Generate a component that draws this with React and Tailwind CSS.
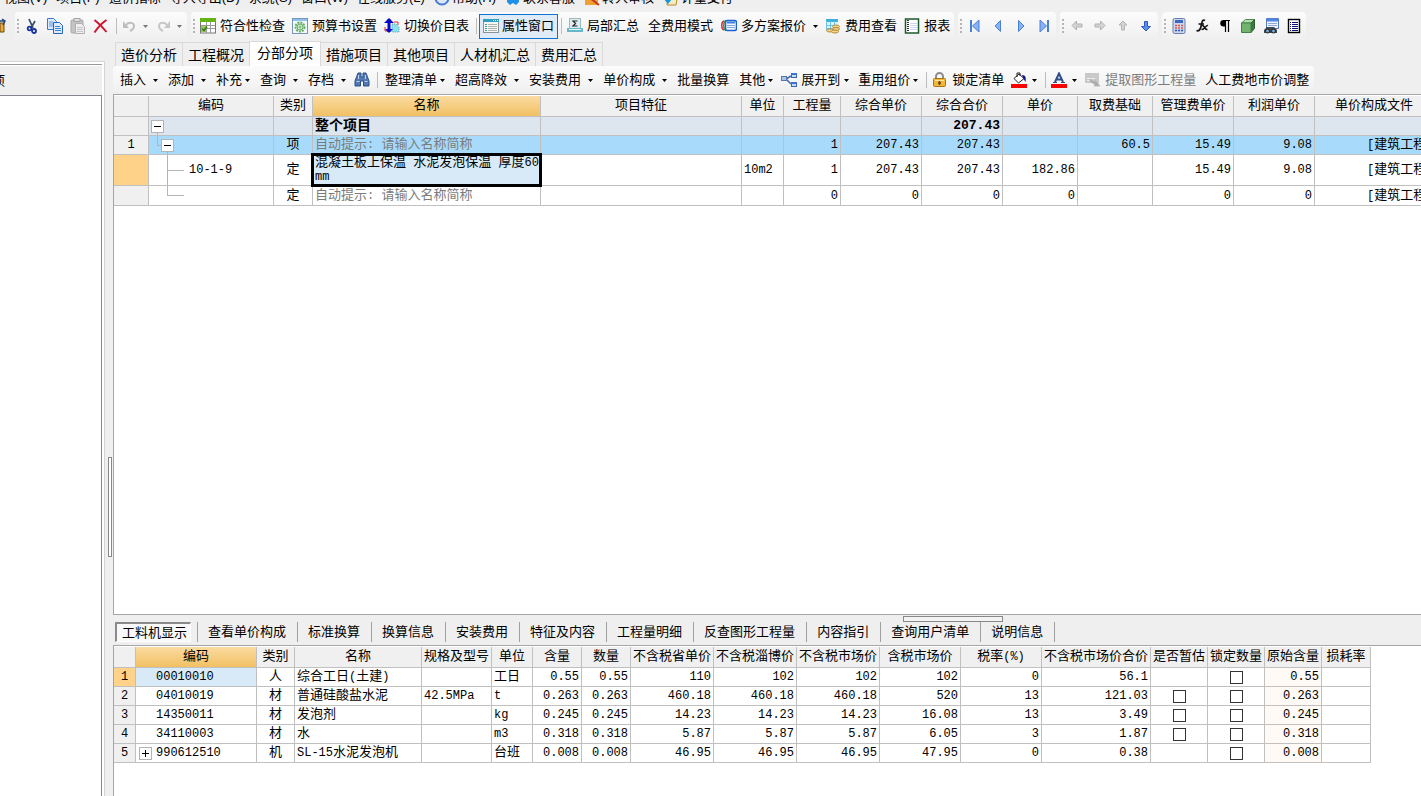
// src/App.jsx
import React, { useState } from 'react';

/* ---------- icons ---------- */

const Svg = ({ children, w = 16, h = 16 }) => (
  <svg className="shrink-0" width={w} height={h} viewBox={`0 0 ${w} ${h}`} fill="none" aria-hidden="true">
    {children}
  </svg>
);

const icons = {
  cut: (
    <Svg>
      <path d="M5 1l4 9M11 3L7 10" stroke="#3c4f6b" strokeWidth="1.8" />
      <circle cx="5.500" cy="10.500" r="1.800" stroke="#16349c" strokeWidth="1.8" />
      <circle cx="10" cy="13" r="2" stroke="#16349c" strokeWidth="1.8" />
    </Svg>
  ),
  copy: (
    <Svg>
      <path d="M.5.5h6l3 3v8h-9z" fill="#dcebff" stroke="#3a78c8" />
      <path d="M2 4h4M2 6h4M2 8h4" stroke="#5b96dc" />
      <path d="M6.500 4.500h6l3 3v8h-9z" fill="#dcebff" stroke="#2766bd" />
      <path d="M8 8.500h5M8 10.500h6M8 12.500h6" stroke="#3f83d8" />
    </Svg>
  ),
  paste: (
    <Svg>
      <rect x="1" y="2" width="12" height="13" rx="1" fill="#c4c4c4" stroke="#a9a9a9" />
      <rect x="4" y=".5" width="6" height="3" fill="#dedede" stroke="#a5a5a5" />
      <path d="M5.500 5.500h6l3 3v7h-9z" fill="#eee" stroke="#b0b0b0" />
      <path d="M7 9.500h6M7 11.500h6M7 13.500h6" stroke="#c5c5c5" />
    </Svg>
  ),
  remove: (
    <Svg>
      <path d="M1.500 2c4 3 8 7 12 12M13.500 2C9 5 5 9 1.500 14.500" stroke="#d3142c" strokeWidth="2" />
    </Svg>
  ),
  undo: (
    <Svg>
      <path d="M4 7c2-3 8-3 8 1 0 3-2 4-4 5" stroke="#bdbdbd" strokeWidth="2" />
      <path d="M1 3v7h6z" fill="#bdbdbd" />
    </Svg>
  ),
  redo: (
    <Svg>
      <path d="M11 7C9 4 3 4 3 8c0 3 2 4 4 5" stroke="#c6c6c6" strokeWidth="2" />
      <path d="M14 3v7H8z" fill="#c6c6c6" />
    </Svg>
  ),
  check: (
    <Svg>
      <rect x=".5" y="1" width="15" height="14" fill="#fff" stroke="#777" />
      <rect x="0" y="0" width="16" height="4" fill="#63b414" />
      <path d="M1 7.500h14M1 10.500h14M6.500 4v11M10.500 4v11" stroke="#9a9a9a" />
      <rect x="1" y="8" width="5" height="6" fill="#9bc765" />
      <path d="M2 10.500l2 2 3-4" stroke="#2f7d0c" strokeWidth="1.500" />
    </Svg>
  ),
  settings: (
    <Svg>
      <rect x=".5" y=".5" width="15" height="15" fill="#f2f8fd" stroke="#7797b5" />
      <path d="M1 2h14" stroke="#8fc1ec" strokeWidth="2" />
      <circle cx="8" cy="9" r="4.500" stroke="#63ad62" strokeWidth="2" strokeDasharray="2 1" />
      <circle cx="8" cy="9" r="3" fill="#d7f0d0" stroke="#63ad62" />
      <circle cx="8" cy="9" r="1" fill="#fff" stroke="#63ad62" />
    </Svg>
  ),
  swap: (
    <Svg>
      <path d="M8 6h4l3 3v5H8z" fill="#8fe0ea" stroke="#52a8b8" strokeDasharray="1 1" />
      <path d="M1 9v4h3M10 4h4v3" stroke="#e03030" />
      <path d="M5 1v13" stroke="#0808c8" strokeWidth="3" />
      <path d="M0 5l5-5 5 5zM1 11h8l-4 4z" fill="#0808c8" />
    </Svg>
  ),
  props: (
    <Svg>
      <rect x=".5" y="1.500" width="15" height="13" fill="#f6f7f5" stroke="#8a9294" />
      <rect x="0" y="1" width="16" height="3" fill="#2f9fc0" />
      <path d="M10 2.500h1M12 2.500h1M14 2.500h1" stroke="#fff" />
      <path d="M5 6.500h9M5 8.500h9M5 10.500h9M5 12.500h9" stroke="#b0b5ae" />
      <path d="M2 6.500h2M2 8.500h2M2 10.500h2M2 12.500h2" stroke="#3e9d8c" />
    </Svg>
  ),
  partSum: (
    <Svg>
      <rect x="2.500" y=".5" width="11" height="10" fill="#ddeff3" stroke="#9fb6bd" />
      <path d="M10.500 3H6l2.500 2.500L6 8h4.500" stroke="#222" strokeWidth="1.200" />
      <path d="M0 10h16v4H0z" fill="#66b8cf" />
      <path d="M2 11.500h12" stroke="#e9fbff" />
    </Svg>
  ),
  plans: (
    <Svg>
      <path d="M3 3C0 4 0 11 3 12" stroke="#d0323c" strokeWidth="1.500" />
      <path d="M5 2.500c-3 1-3 9 0 10" stroke="#3c9c48" strokeWidth="1.500" />
      <rect x="4.500" y="2.500" width="11" height="10" rx="2" fill="#f2f7ff" stroke="#1b60cc" strokeWidth="1.500" />
      <path d="M6 4.500h8" stroke="#3c7fe0" strokeWidth="2" />
      <path d="M6 7.500h8M6 9.500h8" stroke="#7fa8e2" />
    </Svg>
  ),
  fee: (
    <Svg>
      <rect x="1" y="1" width="12" height="12" fill="#dff3fa" />
      <path d="M1 2.500h12" stroke="#3cafe0" strokeWidth="3" />
      <path d="M1 7.500h12M1 10.500h12M1.500 3v10M5.500 3v10M9.500 3v10" stroke="#6bc5e8" />
      <ellipse cx="11" cy="8.500" rx="3.500" ry="1.500" fill="#f2d48b" stroke="#b98a3c" />
      <ellipse cx="5" cy="12.500" rx="3.500" ry="1.500" fill="#f2d48b" stroke="#b98a3c" />
      <ellipse cx="11" cy="11" rx="3.500" ry="1.500" fill="#f2d48b" stroke="#b98a3c" />
      <ellipse cx="10" cy="13.500" rx="3.500" ry="1.500" fill="#f2d48b" stroke="#b98a3c" />
    </Svg>
  ),
  report: (
    <Svg>
      <rect x="1.500" y="1" width="13" height="14" fill="#fff" stroke="#1d5a2b" strokeWidth="1.500" />
      <path d="M4 2v12" stroke="#333" strokeWidth="2" strokeDasharray="1 1" />
      <path d="M6 5.500h7M6 7.500h7M6 9.500h7M6 11.500h7" stroke="#ccd7f2" />
    </Svg>
  ),
  first: (
    <Svg>
      <path d="M4 2v12" stroke="#4a7fd8" strokeWidth="2" />
      <path d="M12 2v12L5.500 8z" fill="#86b2f7" stroke="#4a7fd8" />
    </Svg>
  ),
  prev: (
    <Svg>
      <path d="M10.500 2.500v11L5 8z" fill="#86b2f7" stroke="#4a7fd8" />
    </Svg>
  ),
  next: (
    <Svg>
      <path d="M5.500 2.500v11L11 8z" fill="#86b2f7" stroke="#4a7fd8" />
    </Svg>
  ),
  last: (
    <Svg>
      <path d="M12 2v12" stroke="#4a7fd8" strokeWidth="2" />
      <path d="M4 2v12l6.500-6z" fill="#86b2f7" stroke="#4a7fd8" />
    </Svg>
  ),
  left: (
    <Svg>
      <path d="M3 7.500L7.500 3v3H13v3H7.500v3z" fill="#d4d4d4" stroke="#b0b0b0" />
    </Svg>
  ),
  right: (
    <Svg>
      <path d="M13 7.500L8.500 3v3H3v3h5.500v3z" fill="#d4d4d4" stroke="#b0b0b0" />
    </Svg>
  ),
  up: (
    <Svg>
      <path d="M8 3l4 4H9.500v5h-3V7H4z" fill="#d4d4d4" stroke="#b4b4b4" />
    </Svg>
  ),
  down: (
    <Svg>
      <path d="M8 13L3.500 8.500h3v-5h3v5h3z" fill="#5b90ef" stroke="#2c5cc0" />
    </Svg>
  ),
  calc: (
    <Svg>
      <rect x="2" y=".5" width="12" height="15" rx="1.500" fill="#c9d6ee" stroke="#6a7fa8" />
      <rect x="4" y="2" width="8" height="3" fill="#3f68c0" />
      <path d="M4 7.500h8M4 10h8" stroke="#e8574c" strokeWidth="1.500" strokeDasharray="2 1" />
      <path d="M4 12.500h8" stroke="#2a55b5" strokeWidth="1.500" strokeDasharray="2 1" />
    </Svg>
  ),
  fx: (
    <Svg>
      <path d="M11 2.500C8.500 1 8 4 7.500 6.500S6 14 2.500 12.500M4.500 6H10" stroke="#111" strokeWidth="1.700" />
      <path d="M8 7.500c3-1 2 5 5.500 4M14 7.500c-2-1-3 4-6.500 4" stroke="#111" strokeWidth="1.500" />
    </Svg>
  ),
  para: (
    <Svg>
      <path d="M9 2H6.500a3 3 0 000 6.500H9" fill="#000" />
      <path d="M8.500 2v12M11.500 2v12M6 2.500h7" stroke="#000" strokeWidth="1.200" />
    </Svg>
  ),
  cube: (
    <Svg>
      <path d="M1.500 5l4-3.500h9L11 5z" fill="#b7dcb0" stroke="#4d8a4d" />
      <path d="M11 5l3.500-3.500v9L11 14.500z" fill="#3c7a41" stroke="#2f6434" />
      <path d="M1.500 5H11v9.500H1.500z" fill="#72b46f" stroke="#3f8443" />
    </Svg>
  ),
  print: (
    <Svg>
      <path d="M3.500.5h12v10h-12z" fill="#eef3fd" stroke="#5678bd" />
      <path d="M4 2h11" stroke="#4e86e0" strokeWidth="3" />
      <path d="M5 5.500h9M5 7.500h9" stroke="#90a8d8" />
      <path d="M1 12l3-3h7l3 3v3H1z" fill="#3e4852" />
      <circle cx="4.500" cy="13" r="2" fill="#74a7cc" stroke="#222" />
      <circle cx="10.500" cy="13" r="2" fill="#74a7cc" stroke="#222" />
    </Svg>
  ),
  list: (
    <Svg>
      <rect x="2.500" y="1.500" width="11" height="13" fill="#fff" stroke="#000" strokeWidth="1.400" />
      <path d="M4 4.500h1M4 6.500h1M4 8.500h1M4 10.500h1M4 12.500h1M6 4.500h6M6 6.500h6M6 8.500h6M6 10.500h6M6 12.500h6" stroke="#101070" />
    </Svg>
  ),
  find: (
    <Svg>
      <path d="M4 1h3v4h2V1h3l3 8v5H9.500V9h-3v5H1V9z" fill="#5379b3" stroke="#2d4f87" />
      <path d="M2.500 9.500h3M10.500 9.500h3M4.500 3v4M11.500 3v4" stroke="#bcd3f0" />
    </Svg>
  ),
  expand: (
    <Svg>
      <path d="M5 7l5-3M5 7l5 5" stroke="#456aa5" strokeWidth="1.500" />
      <rect x=".5" y="4.500" width="5" height="4" fill="#a9c6ee" stroke="#5477ae" />
      <rect x="10.500" y="1.500" width="5" height="4" fill="#c3daf9" stroke="#3d66a8" />
      <rect x="10.500" y="10.500" width="5" height="4" fill="#c3daf9" stroke="#3d66a8" />
      <path d="M10 2h6M10 11h6" stroke="#3d74d0" strokeWidth="2" />
    </Svg>
  ),
  lock: (
    <Svg>
      <path d="M4 7.500V4.500a3.500 3.500 0 017 0v3" stroke="#8d8d8d" strokeWidth="2" />
      <rect x="1.500" y="6.500" width="12" height="8" rx="1" fill="#f1b63a" stroke="#a87516" />
      <path d="M3 8.500h9" stroke="#fbe3a0" />
      <path d="M7.500 9v4M6 11h3" stroke="#6b4708" strokeWidth="1.500" />
    </Svg>
  ),
  fill: (
    <Svg>
      <path d="M3 6.500L8 2l5 4.500-5.500 4.500z" fill="#fff" stroke="#222" />
      <path d="M6 5V1h3v3" stroke="#222" />
      <path d="M11 3c4 0 4 3 3.500 7L12 6z" fill="#15158c" />
      <path d="M0 12h16v4H0z" fill="#f00" />
    </Svg>
  ),
  fontColor: (
    <Svg>
      <path d="M4 10L8 1.500l4 8.500M5.500 7.500h5" stroke="#2f4f86" strokeWidth="2" />
      <path d="M2 10.500h4M10 10.500h4" stroke="#2f4f86" />
      <path d="M0 12h16v4H0z" fill="#f00" />
    </Svg>
  ),
  extract: (
    <Svg>
      <path d="M0 1h14v10H0z" fill="#c9c9c9" />
      <path d="M2 6.500h8M2 8.500h5" stroke="#eee" />
      <path d="M5 7l5 3V8l5 6h-6l1-1.500-5-3z" fill="#a9a9a9" stroke="#bbb" />
    </Svg>
  ),
  help: (
    <Svg>
      <circle cx="8" cy="8" r="6.500" fill="#dbe7fa" stroke="#4a7bd0" strokeWidth="2" />
    </Svg>
  ),
  service: (
    <Svg>
      <path d="M2 3h12v9l-3 3-3-2-3 2-3-3z" fill="#1f8fe8" />
    </Svg>
  ),
  audit: (
    <Svg>
      <path d="M1 4h13v11H1z" fill="#f0a030" />
      <path d="M6 8l9 7" stroke="#c43a1a" strokeWidth="2" />
    </Svg>
  ),
  pay: (
    <Svg>
      <path d="M5 3h10l-2 12H4z" fill="#f5ecc8" stroke="#c08a20" />
      <path d="M0 8l5 6 4-5" fill="#1597d8" />
    </Svg>
  ),
};

const Arrow = ({ grey }) => (
  <svg className="shrink-0" width="5" height="3" viewBox="0 0 5 3" aria-hidden="true">
    <path d="M0 0h5L2.500 3z" fill={grey ? '#777' : '#000'} />
  </svg>
);

/* ---------- toolbar parts ---------- */

const Group = ({ children }) => (
  <div className="flex h-7 items-center rounded bg-linear-to-b from-[#fcfcfc] to-[#efefef] pl-0.5">
    <span className="flex w-1 flex-col gap-0.5">
      {[0, 1, 2, 3].map(i => (
        <i key={i} className="size-0.5 bg-[#b4b4b4]" />
      ))}
    </span>
    {children}
  </div>
);

const Sep = () => <span className="mr-[2px] ml-[3px] h-4 w-px bg-[#bdbdbd]" />;

const IconButton = ({ icon, label }) => (
  <button type="button" aria-label={label} className="pr-1 pl-[3px]">
    {icons[icon]}
  </button>
);

const IconDrop = ({ icon, label, grey }) => (
  <button type="button" aria-label={label} className="flex items-center gap-[5px] pr-[5px] pl-[3px]">
    {icons[icon]}
    <Arrow grey={grey} />
  </button>
);

// icon + text, with an optional drop-down arrow
const LabelButton = ({ icon, text, drop, wide, disabled }) => (
  <button
    type="button"
    disabled={disabled}
    className="flex items-center gap-1 pr-1 pl-[3px] whitespace-nowrap disabled:text-[#7d7d7d]"
  >
    {icons[icon]}
    <span className={wide ? 'pr-[3px]' : ''}>{text}</span>
    {drop && <Arrow />}
  </button>
);

const TextButton = ({ text }) => (
  <button type="button" className="px-[5px] whitespace-nowrap">
    {text}
  </button>
);

const TextDrop = ({ text, tight }) => (
  <button
    type="button"
    className={`flex items-center px-[5px] whitespace-nowrap ${tight ? 'gap-[3px]' : 'gap-[7px]'}`}
  >
    {text}
    <Arrow />
  </button>
);

/* ---------- grid helpers ---------- */

// half-width characters are set one size down so that they take 7px each
const mix = text =>
  String(text)
    .split(/([\x20-\x7e]+)/)
    .filter(Boolean)
    .map((part, i) =>
      /^[\x20-\x7e]+$/.test(part) ? (
        <span key={i} className="text-xs leading-none whitespace-pre-wrap">{part}</span>
      ) : (
        part
      )
    );

const line = 'border-r border-b border-[#c0c0c0] p-0 font-normal whitespace-nowrap overflow-hidden';
const hot = 'bg-linear-to-b from-[#fbdba0] to-[#f1c062]';

const Toggle = ({ open }) => (
  <button type="button" aria-label={open ? '折叠' : '展开'} className="block size-[13px] shrink-0">
    <Svg w={13} h={13}>
      <rect x=".5" y=".5" width="12" height="12" fill="#fff" stroke="#b4b4b4" />
      <path d={open ? 'M3 6.500h7' : 'M3 6.500h7M6.500 3v7'} stroke="#000" />
    </Svg>
  </button>
);

/* ---------- data ---------- */

const menus = [
  ['视图(V)'], ['项目(P)'], ['造价指标'], ['导入导出(D)'], ['系统(S)'], ['窗口(W)'], ['在线服务(L)'],
  ['帮助(H)', 'help'], ['联系客服', 'service'], ['转入审核', 'audit'], ['计量支付', 'pay'],
];

const pageTabs = ['造价分析', '工程概况', '分部分项', '措施项目', '其他项目', '人材机汇总', '费用汇总'];

const mainCols = [
  ['', 35], ['编码', 125], ['类别', 39], ['名称', 228], ['项目特征', 201], ['单位', 42], ['工程量', 57],
  ['综合单价', 81], ['综合合价', 81], ['单价', 75], ['取费基础', 75], ['管理费单价', 81], ['利润单价', 81],
  ['单价构成文件', 119],
];

// unit, quantity, prices ... file
const mainRows = [
  { kind: 'total', h: 'h-[19px]', bg: 'bg-[#dde5ef] font-bold', no: '', type: '', name: '整个项目', vals: ['', '', '', '207.43', '', '', '', '', ''] },
  { kind: 'item', h: 'h-[19px]', bg: 'bg-[#a8dbfb]', no: '1', type: '项', hint: true, vals: ['', '1', '207.43', '207.43', '', '60.5', '15.49', '9.08', '[建筑工程]'] },
  { kind: 'quota', h: 'h-[31px]', bg: 'bg-white', no: '', type: '定', code: '10-1-9', name: '混凝土板上保温 水泥发泡保温 厚度60mm', vals: ['10m2', '1', '207.43', '207.43', '182.86', '', '15.49', '9.08', '[建筑工程]'] },
  { kind: 'empty', h: 'h-5', bg: 'bg-white', no: '', type: '定', hint: true, vals: ['', '0', '0', '0', '0', '', '0', '0', '[建筑工程]'] },
];

const detailTabs = [
  '查看单价构成', '标准换算', '换算信息', '安装费用', '特征及内容', '工程量明细', '反查图形工程量',
  '内容指引', '查询用户清单', '说明信息',
];

const detailCols = [
  ['', 22], ['编码', 121], ['类别', 38], ['名称', 127], ['规格及型号', 70], ['单位', 41], ['含量', 49], ['数量', 49],
  ['不含税省单价', 83], ['不含税淄博价', 83], ['不含税市场价', 83], ['含税市场价', 81], ['税率(%)', 81],
  ['不含税市场价合价', 109], ['是否暂估', 57], ['锁定数量', 57], ['原始含量', 57], ['损耗率', 49],
];

const detailRows = [
  { code: '00010010', type: '人', name: '综合工日(土建)', spec: '', unit: '工日', nums: ['0.55', '0.55', '110', '102', '102', '102', '0', '56.1'], est: false, orig: '0.55' },
  { code: '04010019', type: '材', name: '普通硅酸盐水泥', spec: '42.5MPa', unit: 't', nums: ['0.263', '0.263', '460.18', '460.18', '460.18', '520', '13', '121.03'], est: true, orig: '0.263' },
  { code: '14350011', type: '材', name: '发泡剂', spec: '', unit: 'kg', nums: ['0.245', '0.245', '14.23', '14.23', '14.23', '16.08', '13', '3.49'], est: true, orig: '0.245' },
  { code: '34110003', type: '材', name: '水', spec: '', unit: 'm3', nums: ['0.318', '0.318', '5.87', '5.87', '5.87', '6.05', '3', '1.87'], est: true, orig: '0.318' },
  { code: '990612510', type: '机', name: 'SL-15水泥发泡机', spec: '', unit: '台班', nums: ['0.008', '0.008', '46.95', '46.95', '46.95', '47.95', '0', '0.38'], est: false, orig: '0.008', parent: true },
];

/* ---------- grids ---------- */

function GridHead({ cols, active }) {
  return (
    <>
      <colgroup>
        {cols.map(([name, w]) => (
          <col key={name} style={{ width: w }} />
        ))}
      </colgroup>
      <thead>
        <tr className="h-[21px]">
          {cols.map(([name]) => (
            <th key={name} scope="col" className={`${line} ${name === active ? hot : 'bg-[#f0f0f0]'}`}>
              {mix(name)}
            </th>
          ))}
        </tr>
      </thead>
    </>
  );
}

// open toggle with the start of the line to its children
const Branch = () => (
  <div className="flex flex-col items-center">
    <Toggle open />
    <span className="h-0.5 w-px bg-[#b4b4b4]" />
  </div>
);

// tree lines and toggle of the code column
function TreeCell({ row }) {
  if (row.kind === 'total') {
    return (
      <div className="flex h-[18px] items-end pl-[2px]">
        <Branch />
      </div>
    );
  }
  if (row.kind === 'item') {
    return (
      <div className="flex h-[18px] items-end pl-2">
        <Svg w={4} h={18}>
          <path d="M.5 0v9.500H4" stroke="#b4b4b4" />
        </Svg>
        <Branch />
      </div>
    );
  }
  const h = row.kind === 'quota' ? 30 : 19;
  return (
    <div className="flex items-center gap-[5px] pl-[18px]">
      <Svg w={17} h={h}>
        <path d={row.kind === 'quota' ? 'M.5 0v30M0 15.500h17' : 'M.5 0v9.500M0 9.500h17'} stroke="#b4b4b4" />
      </Svg>
      <span className="text-xs">{row.code}</span>
    </div>
  );
}

function MainGrid() {
  return (
    <table className="w-[1320px] table-fixed border-separate border-spacing-0 leading-[14px]">
      <GridHead cols={mainCols} active="名称" />
      <tbody>
        {mainRows.map(row => (
          <tr key={row.kind} className={`${row.h} ${row.bg}`}>
            <td className={`${line} text-center text-xs ${row.kind === 'quota' ? 'bg-[#ffd28a]' : 'bg-[#f0f0f0]'}`}>
              {row.no}
            </td>
            <td className={line}>
              <TreeCell row={row} />
            </td>
            <td className={`${line} text-center`}>{row.type}</td>
            {row.kind === 'quota' ? (
              <td className="relative border-r border-b border-[#c0c0c0] p-0">
                {/* cell being edited, its frame lies over the grid lines */}
                <div className="absolute -inset-x-0.5 -inset-y-0.5 border-[3px] border-black bg-[#d8eaf8] pl-px leading-[14px] break-all whitespace-normal">
                  {mix(row.name)}
                </div>
              </td>
            ) : (
              <td className={`border-r border-b border-[#c0c0c0] p-0 pl-0.5 whitespace-nowrap ${row.hint ? 'text-[#7b7b7b]' : 'text-sm leading-[14px] font-bold'}`}>
                {row.hint ? mix('自动提示: 请输入名称简称') : row.name}
              </td>
            )}
            <td className={line}></td>
            {row.vals.map((v, i) => (
              <td
                key={i}
                className={`border-r border-b border-[#c0c0c0] p-0 whitespace-nowrap ${
                  i === 0 ? 'pl-0.5' : i === 8 ? 'pl-[52px]' : 'pr-0.5 text-right'
                }`}
              >
                {row.kind === 'total' ? v : mix(v)}
              </td>
            ))}
          </tr>
        ))}
      </tbody>
    </table>
  );
}

const Tick = ({ label }) => (
  <input
    type="checkbox"
    aria-label={label}
    className="mx-auto block size-[13px] appearance-none border border-[#333] bg-white checked:bg-[#333]"
  />
);

function DetailGrid() {
  return (
    <table className="w-[1257px] table-fixed border-separate border-spacing-0 leading-[14px]">
      <GridHead cols={detailCols} active="编码" />
      <tbody>
        {detailRows.map((row, i) => (
          <tr key={row.code} className="h-[19px] bg-white">
            <td className={`${line} text-center text-xs ${i === 0 ? 'bg-[#ffd28a]' : 'bg-[#f0f0f0]'}`}>{i + 1}</td>
            <td className={`${line} text-xs ${i === 0 ? 'bg-[#d8eaf8]' : ''}`}>
              <div className="flex items-center gap-1 pl-[3px]">
                {row.parent ? <Toggle /> : <span className="w-[13px]" />}
                {row.code}
              </div>
            </td>
            <td className={`${line} text-center`}>{row.type}</td>
            <td className={`${line} pl-0.5`}>{mix(row.name)}</td>
            <td className={`${line} pl-0.5`}>{mix(row.spec)}</td>
            <td className={`${line} pl-0.5`}>{mix(row.unit)}</td>
            {row.nums.map((n, k) => (
              <td key={k} className={`${line} pr-0.5 text-right text-xs`}>{n}</td>
            ))}
            <td className={line}>{row.est && <Tick label={`是否暂估 ${row.code}`} />}</td>
            <td className={line}><Tick label={`锁定数量 ${row.code}`} /></td>
            <td className={`${line} bg-[#fffaf5] pr-0.5 text-right text-xs`}>{row.orig}</td>
            <td className={line}></td>
          </tr>
        ))}
      </tbody>
    </table>
  );
}

/* ---------- page ---------- */

export default function App() {
  const [page, setPage] = useState('分部分项');

  return (
    <div className="flex h-screen flex-col overflow-hidden bg-[#efefef] font-['Liberation_Sans','Noto_Sans_CJK_SC',sans-serif] text-[13px] leading-[18px] text-black">
      {/* menu */}
      <nav className="flex h-3 shrink-0 items-end gap-[9px] overflow-hidden pb-[5px] pl-1">
        {menus.map(([text, icon]) => (
          <button key={text} type="button" className="flex items-center gap-0.5 whitespace-nowrap">
            {icon && icons[icon]}
            {text}
          </button>
        ))}
      </nav>

      {/* main toolbar */}
      <div className="flex h-7 shrink-0 items-center gap-1">
        <div className="w-[11px] overflow-hidden">
          <Svg w={11} h={16}>
            <path d="M0 5h4v9H0z" fill="#e9a83c" stroke="#6b4a10" />
            <path d="M0 3h4M2 1l3 2-2 4" stroke="#26457c" strokeWidth="1.500" />
          </Svg>
        </div>
        <Group>
          <IconButton icon="cut" label="剪切" />
          <IconButton icon="copy" label="复制" />
          <IconButton icon="paste" label="粘贴" />
          <IconButton icon="remove" label="删除" />
          <Sep />
          <IconDrop icon="undo" label="撤销" grey />
          <IconDrop icon="redo" label="重做" grey />
        </Group>
        <Group>
          <LabelButton icon="check" text="符合性检查" />
          <LabelButton icon="settings" text="预算书设置" />
          <LabelButton icon="swap" text="切换价目表" />
          <Sep />
          <button
            type="button"
            aria-pressed="true"
            className="flex h-[25px] items-center gap-[3px] border border-[#0f74cf] bg-[#dfecf8] px-[3px] whitespace-nowrap"
          >
            {icons.props}
            属性窗口
          </button>
          <Sep />
          <LabelButton icon="partSum" text="局部汇总" />
          <TextButton text="全费用模式" />
          <LabelButton icon="plans" text="多方案报价" drop wide />
          <LabelButton icon="fee" text="费用查看" />
          <LabelButton icon="report" text="报表" />
        </Group>
        <Group>
          <IconButton icon="first" label="首条" />
          <IconButton icon="prev" label="上一条" />
          <IconButton icon="next" label="下一条" />
          <IconButton icon="last" label="末条" />
        </Group>
        <Group>
          <IconButton icon="left" label="升级" />
          <IconButton icon="right" label="降级" />
          <IconButton icon="up" label="上移" />
          <IconButton icon="down" label="下移" />
        </Group>
        <Group>
          <IconButton icon="calc" label="计算器" />
          <IconButton icon="fx" label="函数" />
          <IconButton icon="para" label="段落" />
          <IconButton icon="cube" label="图形" />
          <IconButton icon="print" label="预览" />
          <IconButton icon="list" label="清单" />
        </Group>
      </div>

      <div className="flex min-h-0 flex-1">
        {/* project tree, cut off at the left */}
        <aside className="mt-[21px] flex w-[105px] shrink-0 flex-col border-t border-r border-[#d4d4d4] bg-white pt-0.5 pr-0.5">
          <div className="h-[31px] overflow-hidden border-t border-[#999]">
            <div className="-ml-2 h-[30px] border-t border-white bg-[#efefef] leading-[30px]">项</div>
          </div>
          <div className="flex-1 border-t border-r border-[#85858f]"></div>
        </aside>
        <div className="flex w-2 shrink-0 justify-end pr-px">
          <div className="mt-[417px] h-[100px] w-1 border border-[#888] bg-white"></div>
        </div>

        <main className="flex min-w-0 flex-1 flex-col">
          {/* page tabs */}
          <div role="tablist" className="flex h-[26px] shrink-0 items-end pl-0.5 text-sm">
            {pageTabs.map((t, i) => (
              <button
                key={t}
                type="button"
                role="tab"
                aria-selected={t === page}
                onClick={() => setPage(t)}
                className={
                  t === page
                    ? 'h-[25px] border border-b-0 border-[#d9d9d9] bg-white px-[7px] pb-[3px] whitespace-nowrap'
                    : `h-6 border-t border-[#d9d9d9] px-[5px] whitespace-nowrap ${
                        pageTabs[i - 1] === page ? '' : 'border-l'
                      } ${i === pageTabs.length - 1 ? 'border-r' : ''}`
                }
              >
                {t}
              </button>
            ))}
          </div>

          {/* edit toolbar */}
          <div className="flex h-7 shrink-0">
            <div className="flex items-center rounded-sm bg-linear-to-b from-[#fcfcfc] to-[#efefef] pl-0.5">
              <TextDrop text="插入" />
              <TextDrop text="添加" />
              <TextDrop text="补充" tight />
              <TextDrop text="查询" />
              <TextDrop text="存档" />
              <IconButton icon="find" label="查找" />
              <Sep />
              <TextDrop text="整理清单" tight />
              <TextDrop text="超高降效" />
              <TextDrop text="安装费用" />
              <TextDrop text="单价构成" />
              <TextButton text="批量换算" />
              <TextDrop text="其他" tight />
              <LabelButton icon="expand" text="展开到" drop />
              <TextDrop text="重用组价" tight />
              <Sep />
              <LabelButton icon="lock" text="锁定清单" />
              <IconDrop icon="fill" label="填充颜色" />
              <Sep />
              <IconDrop icon="fontColor" label="字体颜色" />
              <LabelButton icon="extract" text="提取图形工程量" disabled />
              <TextButton text="人工费地市价调整" />
            </div>
          </div>

          {/* bill of quantities */}
          <div className="min-h-0 flex-1 overflow-hidden border-y border-l border-[#a5a5aa] bg-white pt-px font-['Liberation_Mono','Noto_Sans_CJK_SC',monospace]">
            <MainGrid />
          </div>

          {/* details of the selected row */}
          <section className="flex h-[181px] shrink-0 flex-col">
            <div className="flex h-[7px] shrink-0 items-end justify-center pl-[371px]">
              <div className="h-[6px] w-[100px] border border-[#888] bg-[#f4f4f4]"></div>
            </div>
            <div className="flex h-[23px] shrink-0 items-start pl-0.5">
              <button
                type="button"
                aria-pressed="true"
                className="mr-1.5 h-5 border border-t-2 border-l-2 border-[#fff] border-t-[#8a8a8a] border-l-[#8a8a8a] bg-[#f8f8f8] pr-[3px] pl-[5px] leading-4 whitespace-nowrap"
              >
                工料机显示
              </button>
              {detailTabs.map(t => (
                <button
                  key={t}
                  type="button"
                  className="h-5 border-l border-[#a0a0a0] pr-[11px] pl-[10px] whitespace-nowrap last:border-r"
                >
                  {t}
                </button>
              ))}
            </div>
            <div className="min-h-0 flex-1 overflow-hidden border-t border-l border-[#a5a5aa] bg-white pt-px font-['Liberation_Mono','Noto_Sans_CJK_SC',monospace]">
              <DetailGrid />
            </div>
          </section>
        </main>
      </div>
    </div>
  );
}
